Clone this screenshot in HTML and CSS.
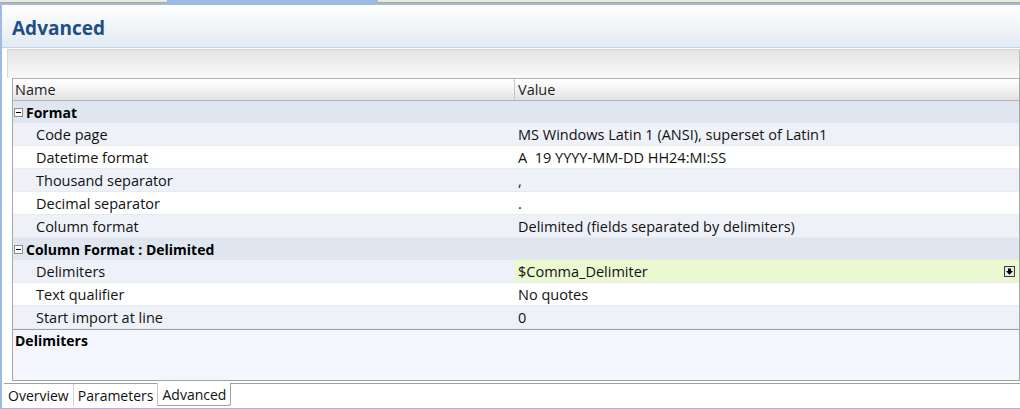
FILE: index.html
```html
<!DOCTYPE html>
<html>
<head>
<meta charset="utf-8">
<link rel="stylesheet" href="styles.css">
</head>
<body>
<div class="window">
  <div class="tabstrip">
    <div class="ts-left"></div>
    <div class="ts-active"></div>
    <div class="ts-right"></div>
  </div>
  <div class="frame">
    <div class="page-header">Advanced</div>
    <div class="header-gap"></div>
    <div class="editor">
      <div class="toolbar"></div>
      <div class="grid">
        <div class="grid-head">
          <div class="cell name">Name</div>
          <div class="cell value">Value</div>
        </div>
        <div class="row cat">
          <div class="cell name"><svg class="minus" width="9" height="9" viewBox="0 0 9 9"><rect x="0.5" y="0.5" width="8" height="8" fill="#fff" stroke="#8c8c8c"/><path d="M2 4.5H7" stroke="#000"/></svg><span>Format</span></div>
        </div>
        <div class="row alt">
          <div class="cell name">Code page</div>
          <div class="cell value">MS Windows Latin 1 (ANSI), superset of Latin1</div>
        </div>
        <div class="row">
          <div class="cell name">Datetime format</div>
          <div class="cell value pre">A  19 YYYY-MM-DD HH24:MI:SS</div>
        </div>
        <div class="row alt">
          <div class="cell name">Thousand separator</div>
          <div class="cell value">,</div>
        </div>
        <div class="row">
          <div class="cell name">Decimal separator</div>
          <div class="cell value">.</div>
        </div>
        <div class="row alt">
          <div class="cell name">Column format</div>
          <div class="cell value">Delimited (fields separated by delimiters)</div>
        </div>
        <div class="row cat">
          <div class="cell name"><svg class="minus" width="9" height="9" viewBox="0 0 9 9"><rect x="0.5" y="0.5" width="8" height="8" fill="#fff" stroke="#8c8c8c"/><path d="M2 4.5H7" stroke="#000"/></svg><span>Column Format : Delimited</span></div>
        </div>
        <div class="row alt">
          <div class="cell name">Delimiters</div>
          <div class="cell value edit"><span>$Comma_Delimiter</span><svg class="dd" width="11" height="11" viewBox="0 0 11 11"><rect x="0.5" y="0.5" width="10" height="10" fill="#e9e9e9" stroke="#3a3a3a"/><path d="M4 2.5H7V5H9L5.5 8.8L2 5H4Z" fill="#000"/></svg></div>
        </div>
        <div class="row">
          <div class="cell name">Text qualifier</div>
          <div class="cell value">No quotes</div>
        </div>
        <div class="row alt">
          <div class="cell name">Start import at line</div>
          <div class="cell value">0</div>
        </div>
        <div class="desc">
          <div class="desc-title">Delimiters</div>
        </div>
      </div>
    </div>
    <div class="tabbar">
      <div class="tabbar-inner">
        <div class="tab">Overview</div>
        <div class="tab">Parameters</div>
        <div class="tab selected">Advanced</div>
      </div>
    </div>
  </div>
</div>
</body>
</html>
```
FILE: styles.css
```css
html, body {
  margin: 0;
  padding: 0;
}
body {
  width: 1020px;
  height: 409px;
  overflow: hidden;
  background: #fff;
  font-family: "Open Sans", "Noto Sans", "DejaVu Sans", sans-serif;
  font-size: 14.5px;
  color: #000;
}
.window {
  display: flex;
  flex-direction: column;
  height: 409px;
}
.tabstrip {
  display: flex;
  height: 3px;
}
.ts-left, .ts-right {
  background: #ece9d8;
  border-bottom: 1px solid #aca899;
  box-sizing: border-box;
}
.ts-left { width: 167px; }
.ts-active { width: 210px; background: #9dbbe9; }
.ts-right { flex: 1; border-left: 1px solid #bdb8a4; }

.frame {
  flex: 1;
  display: flex;
  flex-direction: column;
  min-height: 0;
  border-top: 2px solid #9dbbe9;
  border-left: 2px solid #9dbbe9;
  border-bottom: 1px solid #9dbbe9;
}
.page-header {
  height: 43px;
  box-sizing: border-box;
  padding: 4px 0 0 10px;
  display: flex;
  align-items: center;
  background: linear-gradient(#ffffff 0%, #f7f9fb 30%, #e3eaf3 100%);
  border-bottom: 1px solid #c4d5ea;
  font-size: 19px;
  font-weight: bold;
  color: #1d4f87;
}
.header-gap { height: 1px; background: #fff; }

.editor {
  flex: 1;
  display: flex;
  flex-direction: column;
  margin-left: 5px;
  min-height: 0;
}
.toolbar {
  height: 29px;
  box-sizing: border-box;
  border-top: 1px solid #d2d2d2;
  border-left: 1px solid #d8d8d8;
  border-right: 1px solid #bdbdbd;
  background: linear-gradient(#e4e4e4, #f9f9f9);
}
.grid {
  margin-left: 5px;
  display: flex;
  flex-direction: column;
  border-left: 1px solid #a8a8a8;
  border-right: 1px solid #a8a8a8;
}
.grid-head {
  display: grid;
  grid-template-columns: 502px 1fr;
  height: 23px;
  box-sizing: border-box;
  border-top: 1px solid #aeb2b8;
  border-bottom: 1px solid #aeb2b8;
  background: linear-gradient(#ffffff 0%, #f6f6f6 40%, #e2e2e2 100%);
}
.grid-head .cell {
  display: flex;
  align-items: center;
  padding-left: 2px;
  color: #1e1e1e;
}
.grid-head .cell.name { border-right: 1px solid #c8c8c8; }
.grid-head .cell.value { padding-left: 3px; }

.row {
  display: grid;
  grid-template-columns: 502px 1fr;
  height: 23px;
  box-sizing: border-box;
  border-bottom: 1px solid #e6ebf2;
  background: #fff;
  padding-top: 1px;
}
.row.alt { background: #eef2f8; }
.row.cat {
  height: 22px;
  border-bottom: none;
  background: #dfe6f0;
  grid-template-columns: 1fr;
  padding-top: 0;
}
.row .cell {
  display: flex;
  align-items: center;
  white-space: nowrap;
  color: #111;
}
.row .cell.name { padding-left: 23px; }
.row .cell.value { padding-left: 3px; }
.row.cat .cell.name {
  padding-left: 1px;
  font-weight: bold;
  font-size: 14px;
  color: #000;
}
.minus { margin-right: 3px; flex: none; }
.pre { white-space: pre !important; }
.cell.edit {
  background: #ebf9d1;
  justify-content: space-between;
  padding-right: 4px;
  margin-top: -1px;
}
.dd { flex: none; margin-top: 1px; }

.desc {
  height: 52px;
  box-sizing: border-box;
  border-top: 1px solid #a0a0a0;
  border-bottom: 1px solid #a0a0a0;
  background: #f3f7fd;
  padding: 1px 0 0 2px;
}
.desc-title {
  font-weight: bold;
  font-size: 14px;
  line-height: 20px;
}

.tabbar {
  height: 27px;
  box-sizing: border-box;
  padding: 2px 0 0 2px;
  display: flex;
}
.tabbar-inner {
  flex: 1;
  display: flex;
  border-top: 1px solid #a0a0a0;
}
.tab {
  display: flex;
  align-items: center;
  padding: 1px 4px 0 4px;
  font-size: 14px;
  color: #111;
  border-right: 1px solid #cfcfcf;
  height: 22px;
  box-sizing: border-box;
}
.tab.selected {
  margin-top: -1px;
  height: 23px;
  background: #fff;
  border: 1px solid #a0a0a0;
  border-top: none;
  border-left-color: #c4c4c4;
  border-bottom-right-radius: 3px;
  margin-left: -1px;
}
```
